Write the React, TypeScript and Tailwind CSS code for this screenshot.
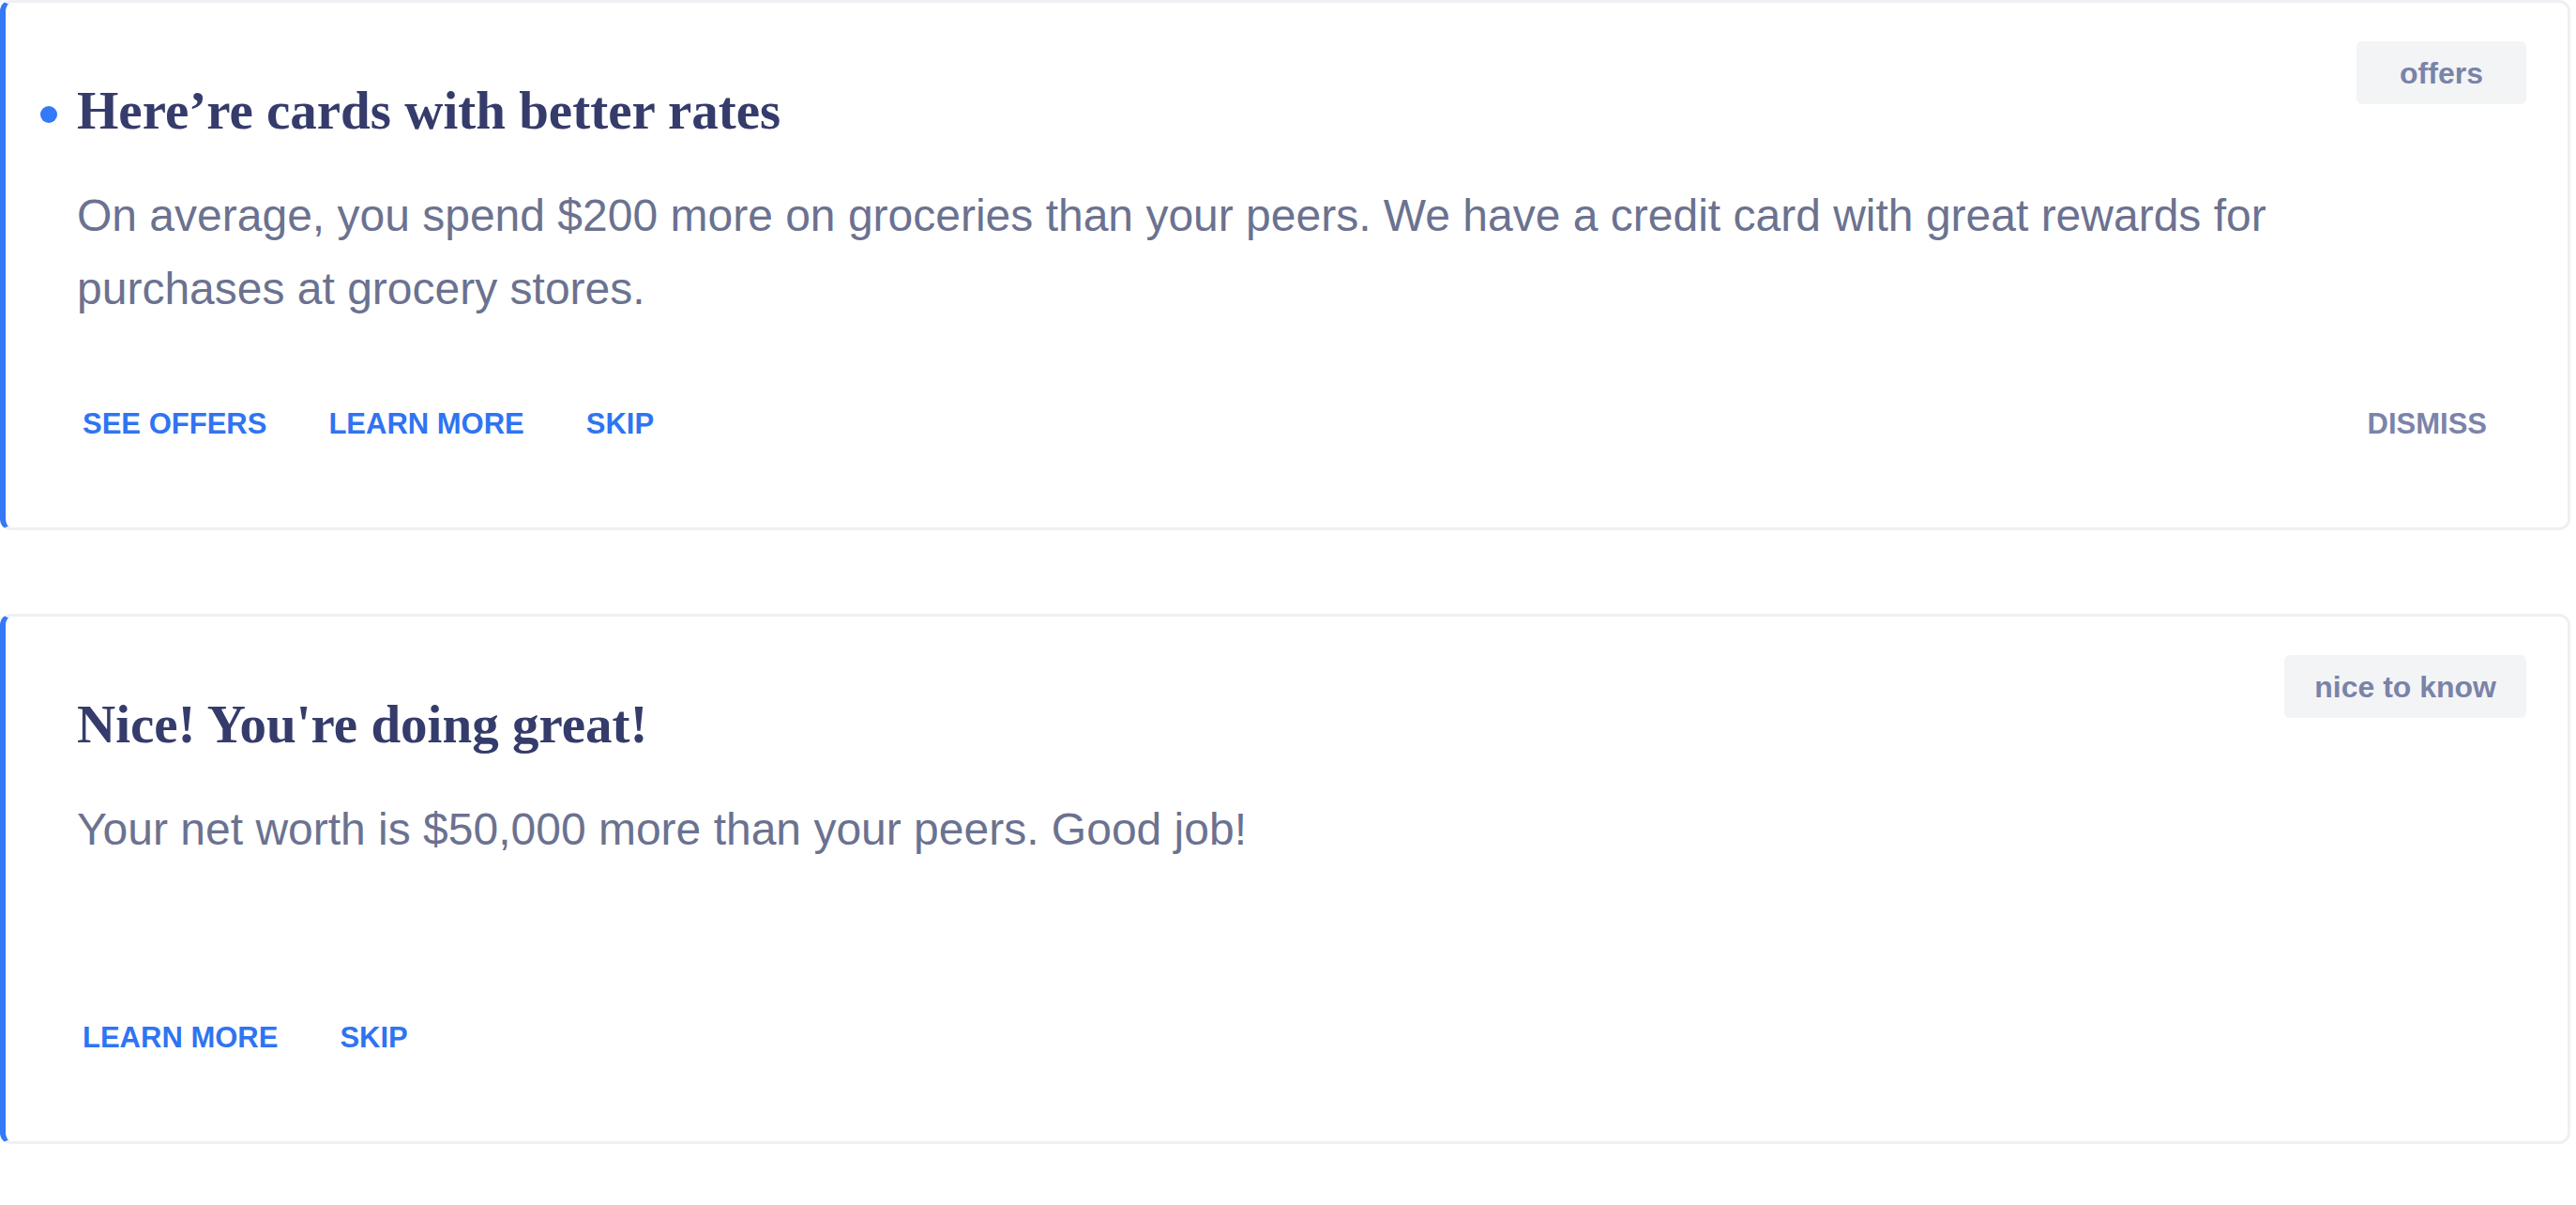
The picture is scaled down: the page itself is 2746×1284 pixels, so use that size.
import React from 'react'

type Insight = {
  id: string
  title: string
  message: string
  tag: string
  unread?: boolean
  actions: string[]
  dismissable?: boolean
}

const insights: Insight[] = [
  {
    id: 'rates',
    title: 'Here’re cards with better rates',
    message:
      'On average, you spend $200 more on groceries than your peers. We have a credit card with great rewards for purchases at grocery stores.',
    tag: 'offers',
    unread: true,
    actions: ['SEE OFFERS', 'LEARN MORE', 'SKIP'],
    dismissable: true,
  },
  {
    id: 'networth',
    title: "Nice! You're doing great!",
    message: 'Your net worth is $50,000 more than your peers. Good job!',
    tag: 'nice to know',
    actions: ['LEARN MORE', 'SKIP'],
  },
]

function InsightCard({ insight }: { insight: Insight }) {
  return (
    <div className="flex h-[565px] flex-col rounded-[12px] border-[3px] border-l-[6px] border-[#eef0f3] border-l-[#3479f6] bg-white pt-[41px] pr-[44px] pb-[95px] pl-[76px]">
      <div className="flex items-start justify-between gap-[60px]">
        <div className="flex-1 pt-[40px]">
          <div className="flex items-center">
            {insight.unread && (
              <span className="mt-[8px] mr-[21px] -ml-[39px] h-[18px] w-[18px] shrink-0 rounded-full bg-[#3479f6]" />
            )}
            <h2 className="font-['Liberation_Serif',serif] text-[57px] leading-[68px] font-bold text-[#353c6b]">
              {insight.title}
            </h2>
          </div>
          <p className="mt-[39px] font-['Liberation_Sans',Arial,sans-serif] text-[48px] leading-[78px] text-[#6b7290]">
            {insight.message}
          </p>
        </div>
        <span className="flex h-[67px] min-w-[181px] shrink-0 items-center justify-center rounded-[6px] bg-[#f3f4f6] px-[32px] font-['Liberation_Sans',Arial,sans-serif] text-[32px] font-bold text-[#7a83a8]">
          {insight.tag}
        </span>
      </div>

      <div className="mt-auto flex items-center font-['Liberation_Sans',Arial,sans-serif] text-[31px] leading-[31px] font-bold">
        <div className="flex items-center gap-[54px]">
          {insight.actions.map((action) => (
            <button key={action} type="button" className="cursor-pointer px-[6px] text-[#2f74f2]">
              {action}
            </button>
          ))}
        </div>
        {insight.dismissable && (
          <button type="button" className="mr-[36px] ml-auto cursor-pointer px-[6px] text-[#7b84a9]">
            DISMISS
          </button>
        )}
      </div>
    </div>
  )
}

function App() {
  return (
    <div className="min-h-screen bg-white">
      <div className="flex w-[2740px] flex-col gap-[89px]">
        {insights.map((insight) => (
          <InsightCard key={insight.id} insight={insight} />
        ))}
      </div>
    </div>
  )
}

export default App
